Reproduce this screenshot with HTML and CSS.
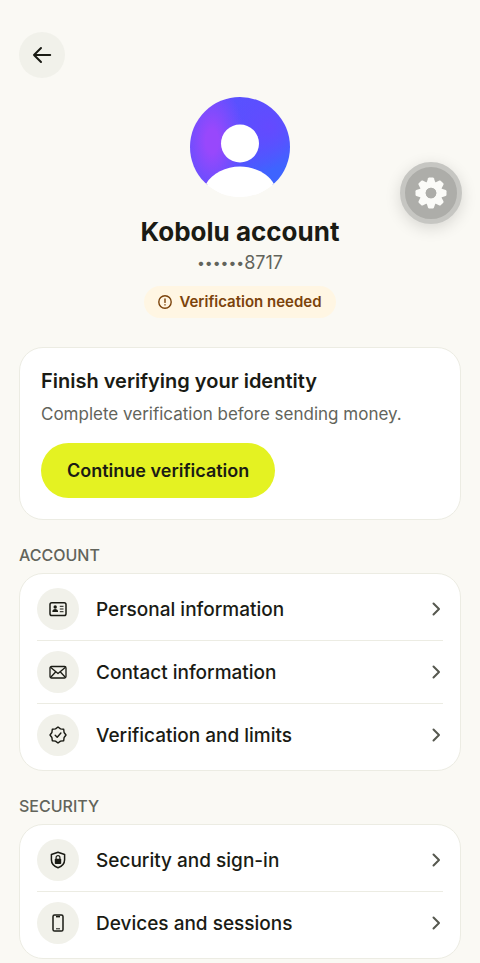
FILE: index.html
```html
<!DOCTYPE html>
<html lang="en">
<head>
<meta charset="utf-8">
<meta name="viewport" content="width=device-width, initial-scale=1">
<title>Kobolu account</title>
<link rel="stylesheet" href="styles.css">
</head>
<body>
<svg class="defs" aria-hidden="true">
  <symbol id="chevron" viewBox="0 0 12 16"><path d="M2.500 2.500L8 8l-5.500 5.500" fill="none" stroke="#56584f" stroke-width="2" stroke-linecap="round" stroke-linejoin="round"/></symbol>
</svg>
<main class="page">
  <button class="back" type="button" aria-label="Back">
    <svg width="20" height="18" viewBox="0 0 20 18" fill="none" stroke="currentColor" stroke-width="2" stroke-linecap="round" stroke-linejoin="round"><path d="M18.200 9H2M9 2L2 9l7 7"/></svg>
  </button>

  <header class="profile">
    <div class="avatar">
      <svg viewBox="0 0 100 100" fill="#fff"><circle cx="50" cy="46.500" r="19"/><path d="M16 87C22 76 36 69.500 50 69.500S78 76 84 87V101H16Z"/></svg>
    </div>
    <h1 class="name">Kobolu account</h1>
    <p class="number"><span class="dots">••••••</span>8717</p>
    <p class="status">
      <svg width="14" height="14" viewBox="0 0 14 14" fill="none" stroke="currentColor" stroke-width="1.400" stroke-linecap="round"><circle cx="7" cy="7" r="6.200"/><path d="M7 4v3.400M7 9.700v.2"/></svg>
      Verification needed
    </p>
  </header>

  <section class="card notice">
    <h2 class="notice-title">Finish verifying your identity</h2>
    <p class="notice-text">Complete verification before sending money.</p>
    <button class="primary" type="button">Continue verification</button>
  </section>

  <h2 class="label">ACCOUNT</h2>
  <nav class="card list" aria-label="Account">
    <a class="row" href="#personal">
      <span class="icon"><svg width="18" height="18" viewBox="0 0 18 18" fill="none" stroke="currentColor"><rect x="1" y="2.700" width="16" height="12.800" rx="1.800" stroke-width="1.500"/><circle cx="6.200" cy="7" r="1.700" fill="currentColor" stroke="none"/><path d="M3.300 12c0-2 1.300-2.900 2.900-2.900S9.100 10 9.100 12z" fill="currentColor" stroke="none"/><path d="M10.800 6.300h3.700M10.800 9h3.700M10.800 11.700h3.700" stroke-width="1"/></svg></span>
      <span class="text">Personal information</span>
      <svg class="chevron"><use href="#chevron"/></svg>
    </a>
    <a class="row" href="#contact">
      <span class="icon"><svg width="18" height="18" viewBox="0 0 18 18" fill="none" stroke="currentColor" stroke-width="1.300" stroke-linejoin="round"><rect x="1" y="3.500" width="16" height="11.500" rx="1.500"/><path d="M1.500 4.200L9 10.500l7.500-6.300M1.500 14.500l5.300-5.700M16.500 14.500l-5.300-5.700"/></svg></span>
      <span class="text">Contact information</span>
      <svg class="chevron"><use href="#chevron"/></svg>
    </a>
    <a class="row" href="#limits">
      <span class="icon"><svg width="18" height="18" viewBox="0 0 18 18" fill="none" stroke="currentColor" stroke-width="1.400" stroke-linecap="round" stroke-linejoin="round"><path d="M9 1L11.500 2.900 14.700 3.300 15.100 6.500 17 9 15.100 11.500 14.700 14.700 11.500 15.100 9 17 6.500 15.100 3.300 14.700 2.900 11.500 1 9 2.900 6.500 3.300 3.300 6.500 2.900z"/><path d="M6.200 9.300l2 2 3.700-4.300"/></svg></span>
      <span class="text">Verification and limits</span>
      <svg class="chevron"><use href="#chevron"/></svg>
    </a>
  </nav>

  <h2 class="label">SECURITY</h2>
  <nav class="card list" aria-label="Security">
    <a class="row" href="#security">
      <span class="icon"><svg width="18" height="18" viewBox="0 0 18 18" fill="none" stroke="currentColor" stroke-linejoin="round"><path d="M9 1.200l6.600 2.300v5.200c0 3.900-2.600 6.600-6.600 8.100-4-1.500-6.600-4.200-6.600-8.100V3.500z" stroke-width="1.500"/><rect x="5.800" y="7.700" width="6.400" height="5.300" rx=".8" fill="currentColor" stroke="none"/><path d="M7.100 8V6.500a1.900 1.900 0 0 1 3.800 0V8" stroke-width="1.200"/></svg></span>
      <span class="text">Security and sign-in</span>
      <svg class="chevron"><use href="#chevron"/></svg>
    </a>
    <a class="row" href="#devices">
      <span class="icon"><svg width="18" height="18" viewBox="0 0 18 18" fill="none" stroke="currentColor"><rect x="4" y="1" width="10" height="16" rx="1.600" stroke-width="1.500"/><path d="M7 2.700h4" stroke-width="1.400"/><path d="M7 14.800h4" stroke-width="1"/></svg></span>
      <span class="text">Devices and sessions</span>
      <svg class="chevron"><use href="#chevron"/></svg>
    </a>
  </nav>
</main>

<button class="settings" type="button" aria-label="Settings">
  <svg width="32" height="32" viewBox="-16 -16 32 32">
    <defs><path id="tooth" d="M-4.500-10L-2.900-14.700Q-2.600-15.500-1.800-15.500H1.800Q2.600-15.500 2.900-14.700L4.500-10z"/></defs>
    <g fill="#fbfbf8"><use href="#tooth"/><use href="#tooth" transform="rotate(45)"/><use href="#tooth" transform="rotate(90)"/><use href="#tooth" transform="rotate(135)"/><use href="#tooth" transform="rotate(180)"/><use href="#tooth" transform="rotate(225)"/><use href="#tooth" transform="rotate(270)"/><use href="#tooth" transform="rotate(315)"/></g>
    <circle r="8.300" fill="none" stroke="#fbfbf8" stroke-width="6"/>
    <circle r="5.300" fill="#adada9"/>
  </svg>
</button>
</body>
</html>
```

FILE: styles.css
```css
* {
  box-sizing: border-box;
}

body {
  margin: 0;
  background: #faf9f4;
  color: #1a1b14;
  font-family: Inter, "Liberation Sans", sans-serif;
}

h1,
h2,
p {
  margin: 0;
}

button {
  padding: 0;
  border: 0;
  font: inherit;
  color: inherit;
}

.defs {
  position: absolute;
  width: 0;
  height: 0;
}

.page {
  padding: 32px 19px 0;
}

.back {
  display: grid;
  place-items: center;
  width: 46px;
  height: 46px;
  border-radius: 50%;
  background: #f1f1ea;
}

.profile {
  display: flex;
  flex-direction: column;
  align-items: center;
  margin-top: 19px;
}

.avatar {
  width: 100px;
  height: 100px;
  border-radius: 50%;
  overflow: hidden;
  background:
    linear-gradient(transparent 88%, #fff 88%),
    radial-gradient(ellipse 32% 60% at 22% 44%, #9848fc 0%, #9848fc 20%, rgba(152, 72, 252, 0) 100%),
    radial-gradient(circle at 80% 30%, #644aff 0%, rgba(100, 74, 255, 0) 40%),
    linear-gradient(130deg, #5d50ff, #5552ff 55%, #3e64ff 78%);
}

.avatar svg {
  display: block;
}

.name {
  margin-top: 17px;
  font-size: 26px;
  font-weight: 700;
  line-height: 36px;
}

.number {
  display: flex;
  align-items: center;
  margin-top: 1px;
  color: #62645b;
  font-size: 18px;
  line-height: 24px;
}

.dots {
  font-size: 14px;
}

.status {
  display: flex;
  align-items: center;
  gap: 7px;
  margin-top: 11px;
  padding: 0 14px;
  border-radius: 16px;
  background: #fff6e3;
  color: #7b430b;
  font-size: 15px;
  font-weight: 600;
  line-height: 32px;
}

.card {
  border: 1px solid #ecece3;
  border-radius: 24px;
  background: #fff;
}

.notice {
  margin-top: 29px;
  padding: 20px 21px 21px;
}

.notice-title {
  font-size: 20px;
  font-weight: 600;
  line-height: 26px;
}

.notice-text {
  margin-top: 8px;
  color: #62645b;
  font-size: 17px;
  line-height: 24px;
}

.primary {
  margin-top: 17px;
  padding: 0 26px;
  border-radius: 28px;
  background: #e4f222;
  font-size: 18px;
  font-weight: 600;
  line-height: 55px;
}

.label {
  margin-top: 25px;
  color: #62645b;
  font-size: 16px;
  font-weight: 500;
  line-height: 20px;
}

.list {
  margin-top: 8px;
  padding: 4px 17px;
}

.row {
  display: flex;
  align-items: center;
  gap: 17px;
  padding: 10px 0;
  color: inherit;
  text-decoration: none;
}

.row + .row {
  border-top: 1px solid #ecece3;
}

.icon {
  display: grid;
  place-items: center;
  width: 42px;
  height: 42px;
  border-radius: 50%;
  background: #f1f1ea;
}

.text {
  flex: 1;
  padding-top: 2px;
  font-size: 19px;
  font-weight: 500;
  line-height: 26px;
}

.chevron {
  width: 12px;
  height: 16px;
}

.settings {
  position: fixed;
  top: 162px;
  right: 18px;
  display: grid;
  place-items: center;
  width: 62px;
  height: 62px;
  border: 5px solid #c6c6c2;
  border-radius: 50%;
  background: #adada9;
  box-shadow: 0 4px 16px rgba(0, 0, 0, 0.14);
}
```
